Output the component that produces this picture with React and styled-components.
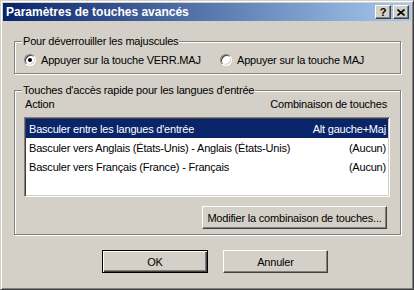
import React from 'react';
import styled, { createGlobalStyle } from 'styled-components';

const Global = createGlobalStyle`
  body {
    margin: 0;
    background: #d4d0c8;
    font-family: "Liberation Sans", Arial, sans-serif;
  }
`;

const Window = styled.div`
  box-sizing: border-box;
  width: 414px;
  height: 290px;
  background: #d4d0c8;
  border: 1px solid;
  border-color: #d4d0c8 #404040 #404040 #d4d0c8;
  box-shadow: inset 1px 1px 0 #fff, inset -1px -1px 0 #808080;
  padding: 2px;
  display: flex;
  flex-direction: column;
  font-size: 11px;
  letter-spacing: -0.2px;
  color: #000;
`;

const TitleBar = styled.div`
  height: 18px;
  display: flex;
  align-items: center;
  padding: 0 2px 0 3px;
  background: linear-gradient(to right, #0a246a, #a6caf0);
`;

const Title = styled.div`
  flex: 1;
  color: #fff;
  font-weight: bold;
  font-size: 12px;
  letter-spacing: 0;
`;

const TitleButton = styled.div`
  box-sizing: border-box;
  width: 16px;
  height: 14px;
  margin-left: ${p => p.$gap || 0}px;
  background: #d4d0c8;
  border: 1px solid;
  border-color: #fff #404040 #404040 #fff;
  box-shadow: inset -1px -1px 0 #808080;
  display: flex;
  align-items: center;
  justify-content: center;
  font-weight: bold;
  font-size: 11px;
  letter-spacing: 0;
  line-height: 1;
`;

const Body = styled.div`
  padding: 0 10px 0 11px;
  display: flex;
  flex-direction: column;
`;

const Group = styled.fieldset`
  margin: ${p => p.$top}px 0 0 0;
  min-width: 0;
  border: 1px solid #808080;
  box-shadow: inset 1px 1px 0 #fff, 1px 1px 0 #fff;
  padding: ${p => p.$pad};
  display: flex;
  flex-direction: column;
`;

const Legend = styled.legend`
  padding: 0 1px;
  margin-left: -2px;
  line-height: 13px;
  background: #d4d0c8;
`;

const RadioRow = styled.div`
  display: flex;
  height: 13px;
  align-items: center;
`;

const Option = styled.label`
  display: flex;
  align-items: center;
  width: ${p => p.$w}px;
  gap: 5px;
`;

const Radio = styled.span`
  box-sizing: border-box;
  position: relative;
  width: 12px;
  height: 12px;
  border-radius: 50%;
  border: 1px solid;
  border-color: #808080 #fff #fff #808080;
  box-shadow: inset 1px 1px 0 #404040, inset -1px -1px 0 #d4d0c8;
  background: #fff;
  flex: none;

  &::after {
    content: '';
    display: ${p => (p.$on ? 'block' : 'none')};
    position: absolute;
    left: 3px;
    top: 3px;
    width: 4px;
    height: 4px;
    border-radius: 50%;
    background: #000;
  }
`;

const Header = styled.div`
  display: flex;
  justify-content: space-between;
  line-height: 13px;
  padding: 1px 3px 0 1px;
`;

const List = styled.div`
  box-sizing: border-box;
  margin-top: 6px;
  height: 80px;
  background: #fff;
  border: 1px solid;
  border-color: #808080 #fff #fff #808080;
  box-shadow: inset 1px 1px 0 #404040, inset -1px -1px 0 #d4d0c8;
  padding: 1px;
`;

const Row = styled.div`
  height: 19px;
  display: flex;
  align-items: center;
  justify-content: space-between;
  padding: 0 2px 0 3px;
  background: ${p => (p.$sel ? '#0a246a' : 'transparent')};
  color: ${p => (p.$sel ? '#fff' : '#000')};
`;

const Button = styled.button`
  box-sizing: border-box;
  width: ${p => p.$w}px;
  height: 23px;
  padding: 0;
  font: inherit;
  letter-spacing: inherit;
  color: #000;
  background: #d4d0c8;
  border: 1px solid;
  border-color: #fff #404040 #404040 #fff;
  box-shadow: inset -1px -1px 0 #808080;
  outline: none;
`;

const DefaultButton = styled(Button)`
  border: 1px solid #000;
  box-shadow: inset 1px 1px 0 #fff, inset -1px -1px 0 #404040, inset -2px -2px 0 #808080;
`;

const ModifyButton = styled(Button)`
  align-self: flex-end;
  margin: 9px 3px 0 0;
`;

const Footer = styled.div`
  display: flex;
  gap: 15px;
  padding: 15px 0 0 99px;
`;

const rows = [
  ["Basculer entre les langues d'entrée", 'Alt gauche+Maj'],
  ['Basculer vers Anglais (États-Unis) - Anglais (États-Unis)', '(Aucun)'],
  ['Basculer vers Français (France) - Français', '(Aucun)'],
];

export default function App() {
  return (
    <>
      <Global />
      <Window>
        <TitleBar>
          <Title>Paramètres de touches avancés</Title>
          <TitleButton>?</TitleButton>
          <TitleButton $gap={2}>
            <svg width="8" height="7" viewBox="0 0 8 7">
              <path d="M0.5 0.5 L7.5 6.5 M7.5 0.5 L0.5 6.5" stroke="#000" strokeWidth="1.6" />
            </svg>
          </TitleButton>
        </TitleBar>
        <Body>
          <Group $top={14} $pad="5px 10px 7px 9px">
            <Legend>Pour déverrouiller les majuscules</Legend>
            <RadioRow>
              <Option $w={196}>
                <Radio $on />
                Appuyer sur la touche VERR.MAJ
              </Option>
              <Option>
                <Radio />
                Appuyer sur la touche MAJ
              </Option>
            </RadioRow>
          </Group>
          <Group $top={10} $pad="0 10px 5px 9px">
            <Legend>Touches d'accès rapide pour les langues d'entrée</Legend>
            <Header>
              <span>Action</span>
              <span>Combinaison de touches</span>
            </Header>
            <List>
              {rows.map(([a, k], i) => (
                <Row key={a} $sel={i === 0}>
                  <span>{a}</span>
                  <span>{k}</span>
                </Row>
              ))}
            </List>
            <ModifyButton $w={185}>Modifier la combinaison de touches...</ModifyButton>
          </Group>
        </Body>
        <Footer>
          <DefaultButton $w={106}>OK</DefaultButton>
          <Button $w={105}>Annuler</Button>
        </Footer>
      </Window>
    </>
  );
}
